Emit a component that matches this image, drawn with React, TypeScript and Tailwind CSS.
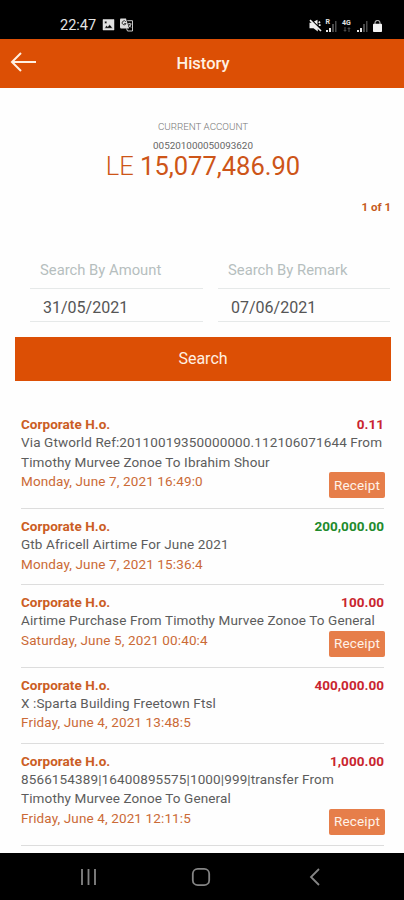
import { ReactNode } from "react";

type TransactionProps = {
  amount: string;
  credit?: boolean;
  remark: ReactNode;
  date: string;
  receipt?: boolean;
};

const transactions: TransactionProps[] = [
  {
    amount: "0.11",
    remark: (
      <>
        Via Gtworld Ref:20110019350000000.112106071644 From
        <br />
        Timothy Murvee Zonoe To Ibrahim Shour
      </>
    ),
    date: "Monday, June 7, 2021 16:49:0",
    receipt: true,
  },
  {
    amount: "200,000.00",
    credit: true,
    remark: "Gtb Africell Airtime For June 2021",
    date: "Monday, June 7, 2021 15:36:4",
  },
  {
    amount: "100.00",
    remark: "Airtime Purchase From Timothy Murvee Zonoe To General",
    date: "Saturday, June 5, 2021 00:40:4",
    receipt: true,
  },
  {
    amount: "400,000.00",
    remark: "X :Sparta Building Freetown Ftsl",
    date: "Friday, June 4, 2021 13:48:5",
  },
  {
    amount: "1,000.00",
    remark: (
      <>
        8566154389|16400895575|1000|999|transfer From
        <br />
        Timothy Murvee Zonoe To General
      </>
    ),
    date: "Friday, June 4, 2021 12:11:5",
    receipt: true,
  },
];

const Signal = () => (
  <svg width="11" height="12" viewBox="0 0 11 12">
    <path d="M0 12V10H2V12ZM3 12V8H5V12Z" fill="#e8e8e8" />
    <path d="M6 12V4H8V12ZM9 12V1H10.5V12Z" fill="#4a4a4a" />
  </svg>
);

const StatusBar = () => (
  <div className="flex h-[39px] shrink-0 items-end justify-between bg-black pr-[22px] pb-[7px] pl-[60px] text-[#e4e4e4]">
    <div className="-mb-px flex items-center">
      <span className="w-[42px] pt-[2px] text-[14.5px] leading-[14px]">
        22:47
      </span>
      <svg width="13" height="12" viewBox="0 0 13 12">
        <path
          d="M1 0.5H12V11H1Z M2.6 9.2H10.6L7.8 5.6L5.8 7.8L4.4 6.6Z M2.7 2.2V4.6H4.8V2.2Z"
          fill="#e4e4e4"
          fillRule="evenodd"
          stroke="#e4e4e4"
          strokeWidth="0.5"
        />
      </svg>
      <svg className="ml-[4px]" width="15" height="14" viewBox="0 0 15 14">
        <path d="M1.5 0.5H7L10 10.5H2.2Q1 10.5 1 9V1.5Z" fill="#dcdcdc" />
        <path
          d="M6.8 3.7A2 2 0 1 0 7 5.6H5.2"
          fill="none"
          stroke="#222"
          strokeWidth="0.9"
        />
        <path
          d="M8.3 2.7H13.5V13H8.5L7.5 10.5M8.6 5.8H12.4M10.6 4.9V5.8M12 6Q11.4 8.6 9.6 9.4M9.6 6.8L12 9.5"
          fill="none"
          stroke="#dcdcdc"
          strokeWidth="0.9"
        />
      </svg>
    </div>
    <div className="flex items-end">
      <svg
        className="mr-[4px]"
        width="13"
        height="13"
        viewBox="0 0 13 13"
        fill="none"
      >
        <path d="M0.5 3.8H4L8.8 8.5V12.5L4.5 9.2H0.5Z" fill="#f0f0f0" />
        <path d="M8.5 0.8V6L5 2.6Z" fill="#f0f0f0" />
        <path
          d="M1 1.2L12 12M9.8 3.8L11 2.6M9.8 6.2H11.6"
          stroke="#f0f0f0"
          strokeWidth="1.7"
        />
      </svg>
      <span className="self-start text-[7px] leading-[6px] font-bold">R</span>
      <span className="-ml-[4px]">
        <Signal />
      </span>
      <span className="ml-[5px] flex w-[9px] flex-col items-center">
        <span className="text-[7px] leading-[7px] font-bold">4G</span>
        <svg width="8" height="5" viewBox="0 0 8 5">
          <path
            d="M2 0V4M0.8 3L2 4.4L3.2 3M6 5V1M4.8 2L6 0.6L7.2 2"
            fill="none"
            stroke="#5a5a5a"
            strokeWidth="0.9"
          />
        </svg>
      </span>
      <span className="ml-[6px]">
        <Signal />
      </span>
      <svg className="ml-[5px]" width="9" height="12" viewBox="0 0 9 12">
        <path
          d="M2 4V3A2.5 2.5 0 0 1 7 3V4"
          fill="none"
          stroke="#a8a8a8"
          strokeWidth="1.2"
        />
        <rect y="3.8" width="9" height="8.2" rx="0.8" fill="#f4f4f4" />
      </svg>
    </div>
  </div>
);

const Header = () => (
  <div className="grid h-[49px] shrink-0 grid-cols-[64px_1fr_62px] items-center bg-[#dc4f05] text-[#fff0e2]">
    <svg
      className="-mt-[3px] ml-[10px]"
      width="28"
      height="22"
      viewBox="0 0 28 22"
    >
      <path
        d="M26 11H2.5M11 2L2 11L11 20"
        fill="none"
        stroke="#fff0e2"
        strokeWidth="2"
      />
    </svg>
    <h1 className="pt-px text-center text-[16.5px] font-medium">History</h1>
  </div>
);

const Transaction = ({
  amount,
  credit,
  remark,
  date,
  receipt,
}: TransactionProps) => (
  <li className="border-b border-[#dddddd] pt-[9px] pb-[10px] text-[13.5px] tracking-[0.13px]">
    <div className="flex justify-between leading-[17px] font-bold tracking-[0.04px]">
      <span className="text-[#cb5d24]">Corporate H.o.</span>
      <span className={credit ? "text-[#218a2c]" : "text-[#c9252f]"}>
        {amount}
      </span>
    </div>
    <p className="leading-[19.5px] whitespace-nowrap text-[#5c5c5c]">
      {remark}
    </p>
    <div className="flex items-start justify-between">
      <span className="leading-[19.5px] text-[#cb6a36]">{date}</span>
      {receipt && (
        <button className="-mr-px h-[26px] w-[56px] rounded-[2px] bg-[#e67e4a] tracking-[0.13px] text-[#fff3e8]">
          Receipt
        </button>
      )}
    </div>
  </li>
);

const NavBar = () => (
  <div className="flex h-[47px] shrink-0 items-center bg-black pl-[80px]">
    <svg width="18" height="18" viewBox="0 0 18 18">
      <path d="M2 1V17M8.5 1V17M15 1V17" stroke="#858585" strokeWidth="1.8" />
    </svg>
    <svg className="ml-[93px]" width="20" height="20" viewBox="0 0 20 20">
      <rect
        x="1.8"
        y="1.8"
        width="16.4"
        height="16.4"
        rx="5"
        fill="none"
        stroke="#858585"
        strokeWidth="1.8"
      />
    </svg>
    <svg className="ml-[97px]" width="14" height="18" viewBox="0 0 14 18">
      <path
        d="M11 1L3 9L11 17"
        fill="none"
        stroke="#858585"
        strokeWidth="1.8"
      />
    </svg>
  </div>
);

const App = () => {
  return (
    <div className="flex h-[900px] w-[404px] flex-col overflow-hidden bg-[#fefefe] font-[Roboto,sans-serif]">
      <StatusBar />
      <Header />
      <main className="min-h-0 flex-1">
        <div className="flex flex-col items-center pt-[33px] pl-[2px]">
          <p className="text-[9.8px] leading-[12px] font-light text-[#777777]">
            CURRENT ACCOUNT
          </p>
          <p className="mt-[7px] text-[9.9px] leading-[12px] text-[#666666]">
            005201000050093620
          </p>
          <p className="text-[25.5px] leading-[28px] text-[#cd5518]">
            <span className="font-light">LE</span> 15,077,486.90
          </p>
        </div>
        <p className="mt-[19px] pr-[13px] text-right text-[11.5px] leading-[17px] font-bold text-[#c65a20]">
          1 of 1
        </p>
        <div className="mt-[36px] grid grid-cols-[173px_172px] gap-x-[15px] pl-[30px]">
          <div className="h-[37px] border-b border-[#e6e9e9] pt-[8px] pl-[10px] text-[14.8px] leading-[20px] text-[#b6bebe]">
            Search By Amount
          </div>
          <div className="h-[37px] border-b border-[#e6e9e9] pt-[8px] pl-[10px] text-[14.8px] leading-[20px] text-[#b6bebe]">
            Search By Remark
          </div>
          <div className="h-[33px] border-b border-[#e6e9e9] pt-[9px] pl-[13px] text-[16px] leading-[20px] text-[#555555]">
            31/05/2021
          </div>
          <div className="h-[33px] border-b border-[#e6e9e9] pt-[9px] pl-[13px] text-[16px] leading-[20px] text-[#555555]">
            07/06/2021
          </div>
        </div>
        <button className="mt-[15px] ml-[15px] block h-[44px] w-[376px] bg-[#dc4f05] text-[16px] text-[#fff0e2]">
          Search
        </button>
        <ul className="mr-[20px] ml-[21px] pt-[26px]">
          {transactions.map((item) => (
            <Transaction key={item.date} {...item} />
          ))}
        </ul>
      </main>
      <NavBar />
    </div>
  );
};

export default App;
